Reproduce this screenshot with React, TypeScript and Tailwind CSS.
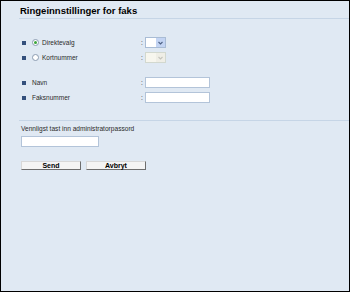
import React from "react";

const Bullet = () => <span className="w-[4px] h-[4px] bg-[#34507c] shrink-0" />;

const Radio = ({ checked }: { checked?: boolean }) => (
  <span className="w-[7px] h-[7px] rounded-full border border-[#8a9bb0] bg-white flex items-center justify-center shrink-0">
    {checked && <span className="w-[3px] h-[3px] rounded-full bg-[#3aa53a]" />}
  </span>
);

const Select = ({ disabled }: { disabled?: boolean }) => (
  <div
    className={`w-[21px] h-[11px] border flex ${
      disabled ? "border-[#d2d8cf] bg-[#f7f6ee]" : "border-[#a9bcd5] bg-white"
    }`}
  >
    <div className="flex-1" />
    <div
      className={`w-[9px] h-full flex items-center justify-center ${
        disabled ? "bg-[#efeee6]" : "bg-[#c3d4f3]"
      }`}
    >
      <svg width="5" height="4" viewBox="0 0 5 4">
        <path d="M0.5 1 L2.5 3 L4.5 1" stroke={disabled ? "#c4c4bc" : "#4d6185"} strokeWidth="1.1" fill="none" />
      </svg>
    </div>
  </div>
);

const TextBox = ({ w }: { w: string }) => (
  <div className={`${w} h-[11px] bg-white border border-[#b3c4d9]`} />
);

const App = () => {
  const rader = [
    { id: 1, tekst: "Direktevalg", checked: true, felt: <Select /> },
    { id: 2, tekst: "Kortnummer", checked: false, felt: <Select disabled /> },
  ];
  const felter = [
    { id: 3, tekst: "Navn" },
    { id: 4, tekst: "Faksnummer" },
  ];

  return (
    <div
      className="w-[350px] h-[292px] border border-black bg-[#e0e9f3] text-[#2a2a2a] overflow-hidden"
      style={{ fontFamily: '"Liberation Sans", Arial, sans-serif' }}
    >
      <div className="ml-[18px] pl-[1px] pt-[4px] pb-[2px] border-b border-[#c6d5e6]">
        <h1 className="text-[9.5px] leading-[11px] font-bold text-black">Ringeinnstillinger for faks</h1>
      </div>

      <div className="mt-[16px]">
        {rader.map((r) => (
          <div key={r.id} className="h-[15px] flex items-center text-[6.5px]">
            <div className="w-[140px] flex items-center pl-[21px]">
              <Bullet />
              <span className="ml-[6px]">
                <Radio checked={r.checked} />
              </span>
              <span className="ml-[3px]">{r.tekst}</span>
            </div>
            <span className="w-[4px]">:</span>
            {r.felt}
          </div>
        ))}
      </div>

      <div className="mt-[10px]">
        {felter.map((f) => (
          <div key={f.id} className="h-[15px] flex items-center text-[6.5px]">
            <div className="w-[140px] flex items-center pl-[21px]">
              <Bullet />
              <span className="ml-[6px]">{f.tekst}</span>
            </div>
            <span className="w-[4px]">:</span>
            <TextBox w="w-[65px]" />
          </div>
        ))}
      </div>

      <div className="mt-[15px] ml-[18px] border-t border-[#c6d5e6] pl-[2px] pt-[3px]">
        <p className="text-[6.6px] leading-[9px]">Vennligst tast inn administratorpassord</p>
        <div className="mt-[3px]">
          <TextBox w="w-[78px]" />
        </div>
        <div className="mt-[14px] flex gap-[5px]">
          <button className="w-[60px] h-[9px] border border-t-[#d8d8d8] border-l-[#d8d8d8] border-b-[#6e6e6e] border-r-[#6e6e6e] bg-[#f4f4f4] text-[7px] leading-[7px] font-bold text-black">
            Send
          </button>
          <button className="w-[60px] h-[9px] border border-t-[#d8d8d8] border-l-[#d8d8d8] border-b-[#6e6e6e] border-r-[#6e6e6e] bg-[#f4f4f4] text-[7px] leading-[7px] font-bold text-black">
            Avbryt
          </button>
        </div>
      </div>
    </div>
  );
};

export default App;
